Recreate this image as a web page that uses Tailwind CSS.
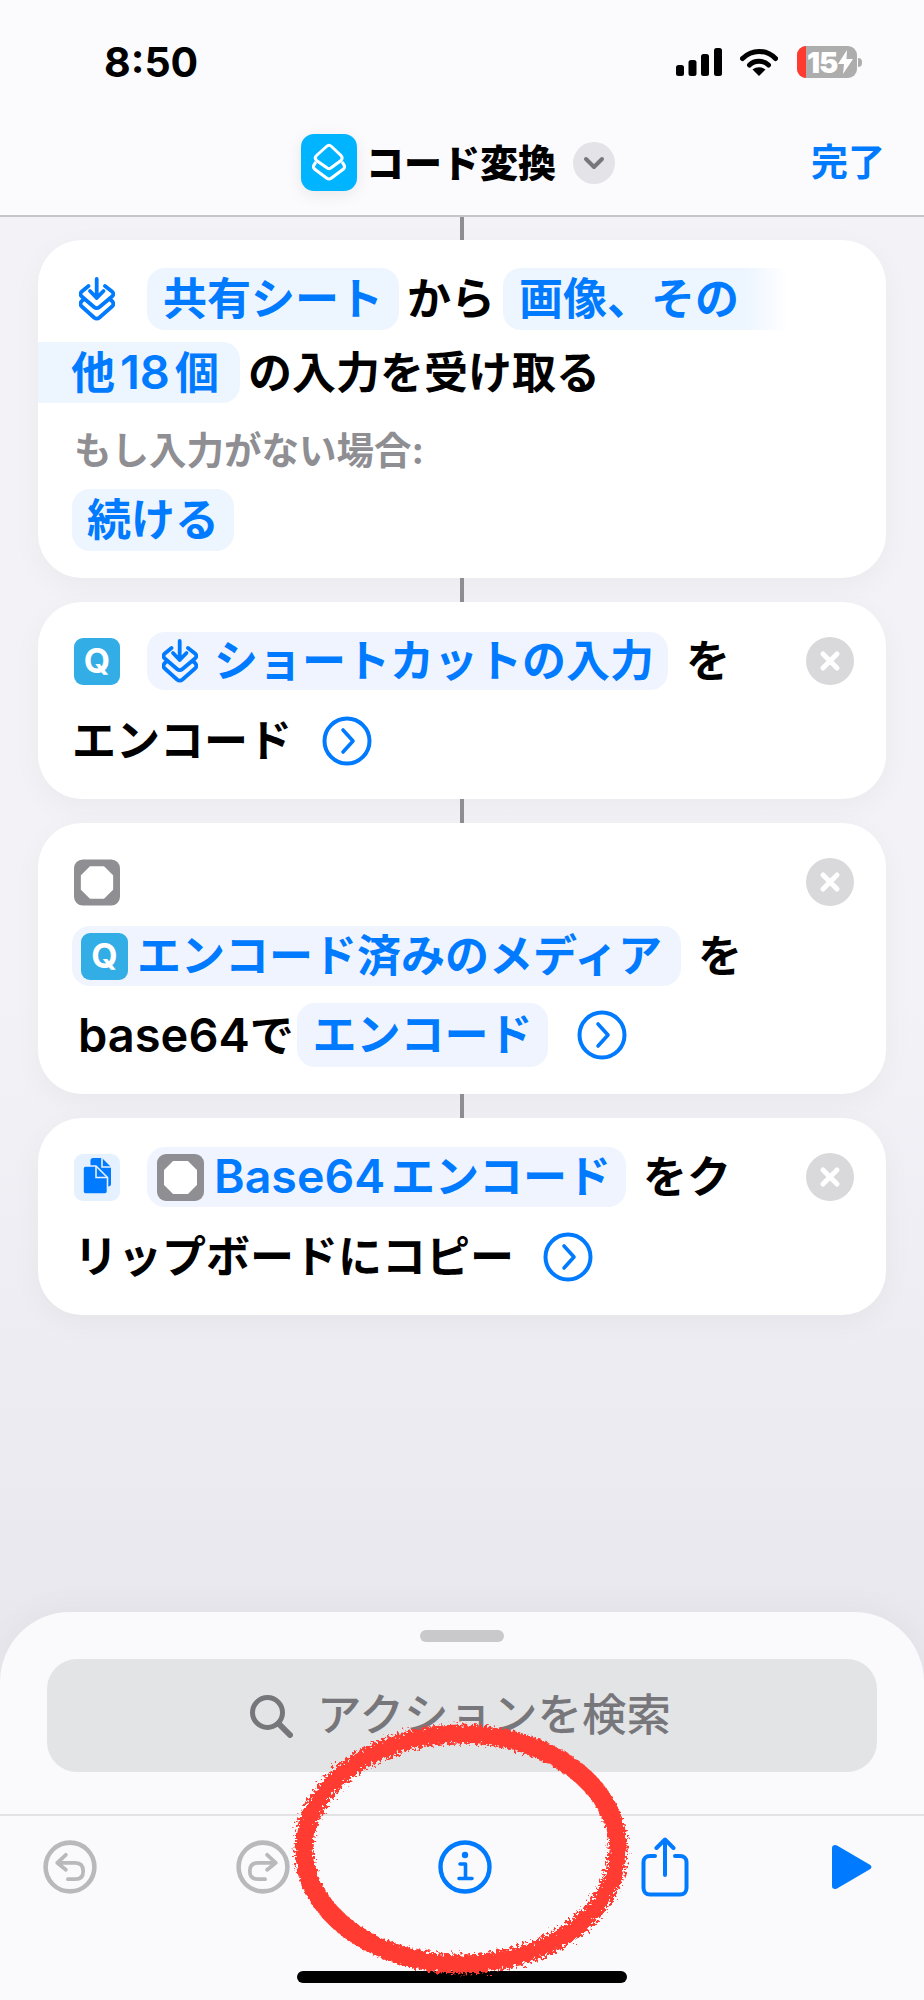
<!DOCTYPE html>
<html lang="ja">
<head>
    <meta charset="UTF-8">
    <meta name="viewport" content="width=device-width, initial-scale=1.0">
    <title>コード変換</title>
    <script src="https://cdn.jsdelivr.net/npm/@tailwindcss/browser@4"></script>
</head>
<body class="[font-family:Inter,'Noto_Sans_CJK_JP',sans-serif]">
    <!-- shared icons -->
    <svg class="hidden">
        <symbol id="input-icon" viewBox="0 0 36 44">
            <path d="M17.700 2V21M11 14L17.700 21L24.500 14" fill="none" stroke="currentColor" stroke-width="3.8" stroke-linecap="round" stroke-linejoin="round"/>
            <path d="M9.500 9L2.800 14.500C1 16 1 18 2.800 19.500L15 30C16.800 31.500 18.700 31.500 20.500 30L33 19.500C34.800 18 34.800 16 33 14.500L26 9" fill="none" stroke="currentColor" stroke-width="3.800" stroke-linecap="round"/>
            <path d="M4.500 22.500L2.800 24C1 26 1 28 2.800 29.500L15 40.500C16.800 42 18.700 42 20.500 40.500L33 29.500C34.800 28 34.800 26 33 24L31 22.500" fill="none" stroke="currentColor" stroke-width="3.800" stroke-linecap="round"/>
        </symbol>
        <symbol id="chevron-circle" viewBox="0 0 50 50">
            <circle cx="25" cy="25" r="22.5" fill="none" stroke="#007aff" stroke-width="4"/>
            <path d="M21 14L31 25L21 36" fill="none" stroke="#007aff" stroke-width="3.6" stroke-linecap="round" stroke-linejoin="round"/>
        </symbol>
        <symbol id="remove-circle" viewBox="0 0 48 48">
            <circle cx="24" cy="24" r="24" fill="#d9d9db"/>
            <path d="M17 17L31 31M31 17L17 31" fill="none" stroke="#fff" stroke-width="5" stroke-linecap="round"/>
        </symbol>
        <symbol id="stop-icon" viewBox="0 0 47 47">
            <rect width="47" height="47" rx="9" fill="#8e8e93"/>
            <path d="M16.5 8H30.5L39 16.5V30.5L30.5 39H16.5L8 30.5V16.5Z" fill="#fff" stroke="#fff" stroke-width="2" stroke-linejoin="round"/>
        </symbol>
    </svg>

    <div class="relative flex h-[2000px] w-[924px] flex-col overflow-hidden bg-linear-to-b from-[#f2f2f7] from-50% to-[#e2e2e8]">
        <!-- header -->
        <header class="h-[217px] shrink-0 border-b-2 border-[#c6c6c8] bg-[#fbfbfd]">
            <div class="flex h-[84px] items-center pt-[40px] pl-[104px]">
                <span class="text-[41px] leading-none font-bold text-black">8:50</span>
                <div class="ml-auto flex items-center pr-[62px]">
                    <svg class="h-[28px] w-[46px]" viewBox="0 0 46 28">
                        <rect x="0" y="17" width="8" height="11" rx="2.5"/>
                        <rect x="12.5" y="12" width="8" height="16" rx="2.5"/>
                        <rect x="25" y="6" width="8" height="22" rx="2.5"/>
                        <rect x="38" y="0" width="8" height="28" rx="2.5"/>
                    </svg>
                    <svg class="ml-[18px] h-[28px] w-[38px]" viewBox="0 0 38 28">
                        <path d="M2.5 10.5C12 1 26 1 35.5 10.5" fill="none" stroke="#000" stroke-width="5" stroke-linecap="round"/>
                        <path d="M9.5 17C14.5 12 23.5 12 28.5 17" fill="none" stroke="#000" stroke-width="5" stroke-linecap="round"/>
                        <path d="M19 28L12.5 21.5C16.5 18.5 21.5 18.5 25.5 21.5Z"/>
                    </svg>
                    <div class="ml-[19px] flex h-[32px] w-[60px] items-center overflow-hidden rounded-[9px] bg-[#adadad]">
                        <div class="h-full w-[9px] shrink-0 bg-[#ff3b30]"></div>
                        <span class="ml-[1px] text-[29px] leading-none font-black tracking-[-1px] text-white">15</span>
                        <svg class="ml-[1px] h-[24px] w-[15px]" viewBox="0 0 15 24"><path d="M9 0L0 14H6L5 24L15 9H8.5Z" fill="#fff"/></svg>
                    </div>
                    <div class="ml-[1px] h-[9px] w-[4px] rounded-r-full bg-[#adadad]"></div>
                </div>
            </div>
            <div class="mt-[50px] flex items-center pl-[301px]">
                <div class="flex h-[57px] w-[56px] items-center justify-center rounded-[13px] bg-[#00b4ff] shadow-[0_4px_16px_rgba(0,0,0,0.08)]">
                    <svg class="h-[57px] w-[56px]" viewBox="0 0 56 57">
                        <path d="M25.5 12.5C27 11 29 11 30.5 12.5L40 21.5C41.5 23 41.5 25 40 26.5L30.5 33.5C29 35 27 35 25.5 33.5L15.5 26.5C14 25 14 23 15.5 21.5Z" fill="none" stroke="#fff" stroke-width="3"/>
                        <path d="M15 28L13.5 30C12 32 12 33.5 13.5 35L25.5 44C27 45.2 29 45.2 30.5 44L42.5 35C44 33.5 44 32 42.5 30L41 28" fill="none" stroke="#fff" stroke-width="3"/>
                    </svg>
                </div>
                <span class="ml-[9px] text-[38px] leading-none font-black text-black">コード変換</span>
                <div class="ml-[17px] flex h-[42px] w-[42px] items-center justify-center rounded-full bg-[#e3e3e8]">
                    <svg class="h-[14px] w-[22px]" viewBox="0 0 22 14"><path d="M3 3L11 11L19 3" fill="none" stroke="#77777b" stroke-width="4" stroke-linecap="round" stroke-linejoin="round"/></svg>
                </div>
                <span class="ml-auto pr-[39px] text-[37px] leading-none font-semibold text-[#007aff]">完了</span>
            </div>
        </header>

        <!-- actions -->
        <main class="flex flex-col items-stretch px-[38px] text-[44px] font-semibold text-black">
            <div class="mx-auto h-[23px] w-[4px] bg-[#8e8e93]"></div>

            <section class="h-[338px] rounded-[44px] bg-white pt-[28px] pl-[36px] shadow-[0_8px_30px_rgba(0,0,0,0.04)]">
                <div class="flex h-[62px] items-center">
                    <svg class="ml-[5px] h-[44px] w-[36px] text-[#007aff]"><use href="#input-icon"/></svg>
                    <span class="ml-[32px] flex h-[62px] items-center rounded-[18px] bg-[#edf5ff] px-[16px] text-[#007aff]">共有シート</span>
                    <span class="ml-[8px]">から</span>
                    <span class="ml-[8px] flex h-[62px] w-[285px] items-center rounded-l-[18px] bg-linear-to-r from-[#edf5ff] from-85% to-white pl-[16px] text-[#007aff]">画像、その</span>
                </div>
                <div class="mt-[12px] -ml-[36px] flex h-[61px] items-center">
                    <span class="flex h-[61px] w-[202px] items-center rounded-r-[18px] bg-[#edf5ff] pl-[33px] text-[#007aff]">他<span class="mx-[5px] text-[47px]">18</span>個</span>
                    <span class="ml-[8px]">の入力を受け取る</span>
                </div>
                <p class="mt-[23px] text-[37.5px] leading-[50px] font-bold text-[#8e8e93]">もし入力がない場合:</p>
                <div class="mt-[13px] -ml-[2px] flex h-[62px] w-[162px] items-center justify-center rounded-[18px] bg-[#edf5ff] text-[#007aff]">続ける</div>
            </section>

            <div class="mx-auto h-[24px] w-[4px] bg-[#8e8e93]"></div>

            <section class="h-[197px] rounded-[44px] bg-white pt-[19px] pr-[32px] pl-[36px] shadow-[0_8px_30px_rgba(0,0,0,0.04)]">
                <div class="flex h-[80px] items-center">
                    <div class="flex h-[47px] w-[46px] items-center justify-center rounded-[9px] bg-[#32ade6] text-[34px] leading-none font-bold text-white">Q</div>
                    <span class="ml-[27px] flex h-[58px] w-[521px] items-center rounded-[18px] bg-[#eff4ff] pl-[15px] text-[#007aff]">
                        <svg class="h-[44px] w-[36px] shrink-0"><use href="#input-icon"/></svg>
                        <span class="ml-[16px]">ショートカットの入力</span>
                    </span>
                    <span class="ml-[18px]">を</span>
                    <svg class="ml-auto h-[48px] w-[48px]"><use href="#remove-circle"/></svg>
                </div>
                <div class="flex h-[80px] items-center">
                    <span class="-ml-[2px]">エンコード</span>
                    <svg class="ml-[30px] h-[50px] w-[50px]"><use href="#chevron-circle"/></svg>
                </div>
            </section>

            <div class="mx-auto h-[24px] w-[4px] bg-[#8e8e93]"></div>

            <section class="h-[271px] rounded-[44px] bg-white pt-[22px] pr-[32px] pl-[36px] shadow-[0_8px_30px_rgba(0,0,0,0.04)]">
                <div class="flex h-[74px] items-center">
                    <svg class="h-[47px] w-[46px]"><use href="#stop-icon"/></svg>
                    <svg class="ml-auto h-[48px] w-[48px]"><use href="#remove-circle"/></svg>
                </div>
                <div class="flex h-[74px] items-center">
                    <span class="-ml-[2px] flex h-[60px] w-[609px] items-center rounded-[18px] bg-[#eff4ff] pl-[9px] text-[#007aff]">
                        <span class="flex h-[47px] w-[47px] shrink-0 items-center justify-center rounded-[9px] bg-[#32ade6] text-[34px] leading-none font-bold text-white">Q</span>
                        <span class="ml-[9px]">エンコード済みのメディア</span>
                    </span>
                    <span class="ml-[17px]">を</span>
                </div>
                <div class="flex h-[84px] items-center">
                    <span class="ml-[4px] w-[219px] shrink-0 whitespace-nowrap"><span class="text-[47px]">base64</span>で</span>
                    <span class="flex h-[64px] w-[251px] shrink-0 items-center justify-center rounded-[18px] bg-[#eff4ff] text-[#007aff]">エンコード</span>
                    <svg class="ml-[29px] h-[50px] w-[50px]"><use href="#chevron-circle"/></svg>
                </div>
            </section>

            <div class="mx-auto h-[24px] w-[4px] bg-[#8e8e93]"></div>

            <section class="h-[197px] rounded-[44px] bg-white pt-[19px] pr-[32px] pl-[36px] shadow-[0_8px_30px_rgba(0,0,0,0.04)]">
                <div class="flex h-[80px] items-center">
                    <svg class="h-[47px] w-[46px]" viewBox="0 0 46 47">
                        <rect width="46" height="47" rx="9" fill="#e6f1ff"/>
                        <path d="M19 4H28L37 13V30C37 31.5 36 32.5 34.5 32.5H19C17.5 32.5 16.5 31.5 16.5 30V6.500C16.500 5 17.500 4 19 4Z" fill="#007aff"/>
                        <path d="M28 4V13H37" fill="none" stroke="#e6f1ff" stroke-width="1.6"/>
                        <path d="M11.500 12H22L33.500 23.500V37.500C33.500 39 32.500 40 31 40H11.500C10 40 9 39 9 37.500V14.500C9 13 10 12 11.500 12Z" fill="#007aff" stroke="#e6f1ff" stroke-width="1.6"/>
                        <path d="M22 12V23.500H33.500" fill="none" stroke="#e6f1ff" stroke-width="1.6"/>
                    </svg>
                    <span class="ml-[27px] flex h-[60px] w-[479px] items-center rounded-[18px] bg-[#eff4ff] pl-[10px] text-[#007aff]">
                        <svg class="h-[47px] w-[47px] shrink-0"><use href="#stop-icon"/></svg>
                        <span class="ml-[10px] whitespace-nowrap"><span class="text-[46.5px]">Base64</span><span class="ml-[6px]">エンコード</span></span>
                    </span>
                    <span class="ml-[17px]">をク</span>
                    <svg class="ml-auto h-[48px] w-[48px]"><use href="#remove-circle"/></svg>
                </div>
                <div class="flex h-[80px] items-center">
                    <span>リップボードにコピー</span>
                    <svg class="ml-[29px] h-[50px] w-[50px]"><use href="#chevron-circle"/></svg>
                </div>
            </section>
        </main>

        <!-- bottom sheet -->
        <div class="mt-auto h-[388px] shrink-0 rounded-t-[70px] bg-[#fafafc] pt-[18px] shadow-[0_-6px_30px_rgba(0,0,0,0.03)]">
            <div class="mx-auto h-[12px] w-[84px] rounded-full bg-[#c9c9cc]"></div>
            <div class="mx-[47px] mt-[17px] flex h-[113px] items-center justify-center rounded-[30px] bg-[#e3e4e6] pr-[4px]">
                <svg class="h-[44px] w-[44px]" viewBox="0 0 44 44">
                    <circle cx="18.5" cy="18.5" r="15" fill="none" stroke="#77777b" stroke-width="5"/>
                    <path d="M29.5 29.5L41 41" stroke="#77777b" stroke-width="6" stroke-linecap="round"/>
                </svg>
                <span class="ml-[24px] text-[44.500px] leading-none font-medium text-[#77777b]">アクションを検索</span>
            </div>
            <div class="mt-[42px] h-[2px] bg-[#e3e3e6]"></div>
            <div class="mt-[21px] flex h-[60px] items-center pl-[43px]">
                <svg class="h-[54px] w-[54px]" viewBox="0 0 52 52" fill="none" stroke="#b9b9bb" stroke-width="4.4" stroke-linecap="round" stroke-linejoin="round">
                    <circle cx="26" cy="26" r="23.5"/>
                    <path d="M22 14.3L13.7 22L22 28.7M13.7 22H31C36 22 38.7 25 38.7 30C38.7 35 36 37.7 31 37.7H24" stroke-width="3.6"/>
                </svg>
                <svg class="ml-[139px] h-[54px] w-[54px]" viewBox="0 0 52 52" fill="none" stroke="#b9b9bb" stroke-width="4.4" stroke-linecap="round" stroke-linejoin="round">
                    <circle cx="26" cy="26" r="23.5"/>
                    <path d="M30 14.3L38.3 22L30 28.7M38.3 22H21C16 22 13.3 25 13.3 30C13.3 35 16 37.7 21 37.7H28" stroke-width="3.6"/>
                </svg>
                <svg class="ml-[148px] h-[54px] w-[54px]" viewBox="0 0 54 54" fill="none" stroke="#007aff" stroke-linecap="round" stroke-linejoin="round">
                    <circle cx="27" cy="27" r="24.5" stroke-width="4.4"/>
                    <circle cx="27" cy="15" r="3.2" fill="#007aff" stroke="none"/>
                    <path d="M22 24H27.5V38M21 38.5H34" stroke-width="3.6"/>
                </svg>
                <svg class="ml-[149px] h-[60px] w-[48px]" viewBox="0 0 48 60" fill="none" stroke="#007aff" stroke-width="4" stroke-linecap="round" stroke-linejoin="round">
                    <path d="M14 19H9C5 19 2.5 21.5 2.5 25V51C2.5 55 5 57.5 9 57.5H39C43 57.5 45.5 55 45.5 51V25C45.5 21.5 43 19 39 19H34"/>
                    <path d="M24 38V3M15.5 11L24 2.5L32.5 11"/>
                </svg>
                <svg class="ml-[143px] h-[44px] w-[40px]" viewBox="0 0 40 44">
                    <path d="M0 3C0 .5 2.5 -.8 5 .6L37.5 19.5C40 21 40 23 37.5 24.5L5 43.4C2.5 44.8 0 43.5 0 41Z" fill="#007aff"/>
                </svg>
            </div>
            <div class="mx-auto mt-[74px] h-[12px] w-[330px] rounded-full bg-black"></div>
        </div>

        <!-- hand drawn circle on top of the screenshot -->
        <svg class="pointer-events-none absolute top-[1715px] left-[285px] h-[270px] w-[354px]" viewBox="0 0 354 270">
            <defs>
                <filter id="rough" x="-10%" y="-10%" width="120%" height="120%">
                    <feTurbulence type="fractalNoise" baseFrequency="0.35" numOctaves="3" seed="4"/>
                    <feDisplacementMap in="SourceGraphic" scale="12"/>
                    <feGaussianBlur stdDeviation="0.5"/>
                </filter>
            </defs>
            <ellipse cx="176" cy="134" rx="157" ry="115" fill="none" stroke="#ff3b30" stroke-width="19" filter="url(#rough)"/>
        </svg>
    </div>
</body>
</html>
